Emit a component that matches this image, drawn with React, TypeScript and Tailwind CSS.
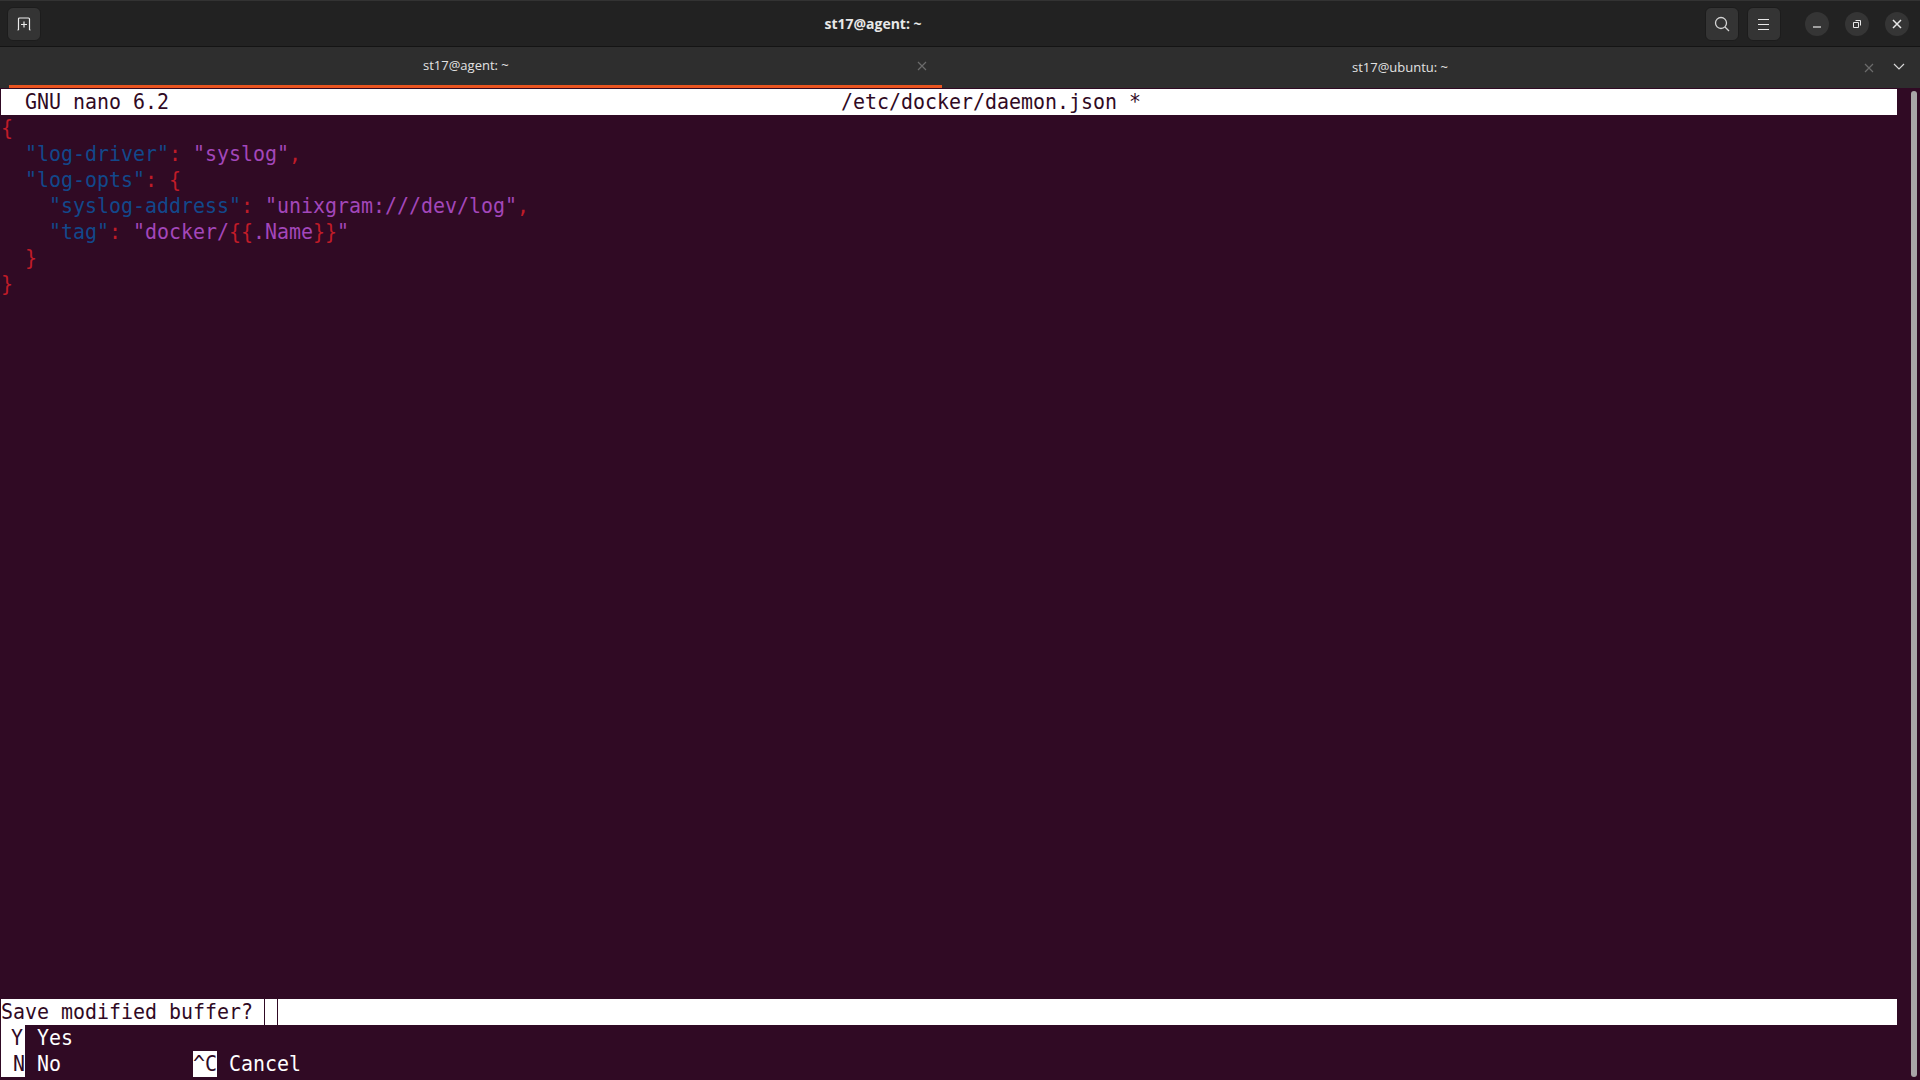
import React from "react";

const R = "text-[#c01c28]";
const B = "text-[#12488b]";
const M = "text-[#a347ba]";
const W = "text-[#ffffff]";

function Mono({ children }: { children: React.ReactNode }) {
  return (
    <div className="whitespace-pre origin-left scale-x-[0.906] font-['DejaVu_Sans_Mono',monospace] text-[22px] leading-[26px] w-max">
      {children}
    </div>
  );
}

function Row({ children }: { children?: React.ReactNode }) {
  return <div className="h-[26px] pl-px overflow-hidden shrink-0">{children}</div>;
}

function IconBtn({ children }: { children: React.ReactNode }) {
  return (
    <div className="w-[34px] h-[34px] rounded-[6px] bg-[#343434] border border-[#1c1c1c] flex items-center justify-center">
      {children}
    </div>
  );
}

function WinBtn({ children }: { children: React.ReactNode }) {
  return <div className="w-6 h-6 rounded-full bg-[#353535] flex items-center justify-center">{children}</div>;
}

function TabClose() {
  return (
    <svg width="10" height="10" viewBox="0 0 10 10" fill="none" stroke="#6b6b6b" strokeWidth="1.2">
      <path d="M1 1l8 8M9 1l-8 8" />
    </svg>
  );
}

export default function App() {
  return (
    <div className="w-[1920px] h-[1080px] flex flex-col overflow-hidden bg-[#300a24]">
      <div className="h-[47px] shrink-0 bg-[#222222] border-t border-[#333333] border-b-[#141414] border-b flex items-center px-[7px] relative">
        <IconBtn>
          <svg width="16" height="16" viewBox="0 0 16 16" fill="none" stroke="#ebebeb" strokeWidth="1.2">
            <path d="M2.5 14V3c0-.6.4-1 1-1h9c.6 0 1 .4 1 1v11M1.5 14h1M13.5 14h1M8 5.5v6M5 8.5h6" />
          </svg>
        </IconBtn>
        <div className="flex-1 text-center font-['Open_Sans','Noto_Sans',sans-serif] font-bold text-[14px] text-[#e8e8e8]">
          st17@agent: ~
        </div>
        <div className="flex items-center gap-2">
          <IconBtn>
            <svg width="16" height="16" viewBox="0 0 16 16" fill="none" stroke="#d4d4d4" strokeWidth="1.3">
              <circle cx="7" cy="7" r="5.5" />
              <path d="M11 11l4 4" />
            </svg>
          </IconBtn>
          <IconBtn>
            <svg width="16" height="16" viewBox="0 0 16 16" fill="none" stroke="#e8e8e8" strokeWidth="1">
              <path d="M2 3.5h11M2 8.5h11M2 13.5h11" />
            </svg>
          </IconBtn>
          <div className="flex items-center gap-4 ml-4 mr-[4px]">
            <WinBtn>
              <svg width="10" height="10" viewBox="0 0 10 10" fill="none" stroke="#e8e8e8" strokeWidth="1.2">
                <path d="M1 8h8" />
              </svg>
            </WinBtn>
            <WinBtn>
              <svg width="10" height="10" viewBox="0 0 10 10" fill="none" stroke="#e8e8e8" strokeWidth="1">
                <path d="M1.5 3.5h5v5h-5zM3.5 1.5h5v5" />
              </svg>
            </WinBtn>
            <WinBtn>
              <svg width="10" height="10" viewBox="0 0 10 10" fill="none" stroke="#e8e8e8" strokeWidth="1.5">
                <path d="M1 1l8 8M9 1l-8 8" />
              </svg>
            </WinBtn>
          </div>
        </div>
      </div>

      <div className="h-[41px] shrink-0 bg-[#2e2e2e] flex font-['Open_Sans','Noto_Sans',sans-serif] text-[13px] text-[#e2e2e2]">
        <div className="w-[933px] ml-[9px] border-b-[3px] border-[#e95420] flex items-center pl-[414px] pr-[15px] justify-between">
          <span>st17@agent: ~</span>
          <TabClose />
        </div>
        <div className="flex-1 flex items-center pl-[410px]">
          <span>st17@ubuntu: ~</span>
          <div className="ml-auto mr-[46px]">
            <TabClose />
          </div>
        </div>
        <div className="absolute left-[1893px] top-[62px]">
          <svg width="12" height="10" viewBox="0 0 12 10" fill="none" stroke="#d8d8d8" strokeWidth="1.2">
            <path d="M1 2l5 5 5-5" />
          </svg>
        </div>
      </div>

      <div className="flex-1 relative pt-px flex flex-col bg-[#300a24] text-white font-medium">
        <div className="absolute right-[3px] top-[3px] bottom-[3px] w-[6px] rounded-full bg-[#a8a5a7]" />
        <div className="h-[26px] w-[1896px] ml-px bg-white text-[#300a24] font-normal shrink-0 flex relative">
          <div className="absolute left-[24px]"><Mono>GNU nano 6.2</Mono></div>
          <div className="absolute left-[840px]"><Mono>/etc/docker/daemon.json *</Mono></div>
        </div>
        <Row><Mono><span className={R}>{"{"}</span></Mono></Row>
        <Row><Mono>{"  "}<span className={B}>"log-driver"</span><span className={R}>: </span><span className={M}>"syslog"</span><span className={R}>,</span></Mono></Row>
        <Row><Mono>{"  "}<span className={B}>"log-opts"</span><span className={R}>: {"{"}</span></Mono></Row>
        <Row><Mono>{"    "}<span className={B}>"syslog-address"</span><span className={R}>: </span><span className={M}>"unixgram:///dev/log"</span><span className={R}>,</span></Mono></Row>
        <Row><Mono>{"    "}<span className={B}>"tag"</span><span className={R}>: </span><span className={M}>"docker/</span><span className={R}>{"{{"}</span><span className={M}>.Name</span><span className={R}>{"}}"}</span><span className={M}>"</span></Mono></Row>
        <Row><Mono>{"  "}<span className={R}>{"}"}</span></Mono></Row>
        <Row><Mono><span className={R}>{"}"}</span></Mono></Row>
        <div className="flex-1" />
        <div className="h-[26px] w-[1896px] ml-px bg-white text-[#300a24] font-normal shrink-0 relative">
          <Mono>Save modified buffer?</Mono>
          <div className="absolute left-[263px] top-0 h-full w-px bg-[#300a24]" />
          <div className="absolute left-[276px] top-0 h-full w-px bg-[#300a24]" />
        </div>
        <div className="h-[26px] shrink-0 flex font-normal">
          <div className="w-[24px] ml-px bg-white text-[#300a24] flex justify-end pr-0"><Mono> Y</Mono></div>
          <div className="pl-3"><Mono>Yes</Mono></div>
        </div>
        <div className="h-[26px] shrink-0 flex font-normal relative">
          <div className="w-[24px] ml-px bg-white text-[#300a24]"><Mono> N</Mono></div>
          <div className="pl-3"><Mono>No</Mono></div>
          <div className="absolute left-[193px] w-[24px] h-full bg-white text-[#300a24]"><Mono>^C</Mono></div>
          <div className="absolute left-[229px]"><Mono>Cancel</Mono></div>
        </div>
        <div className="h-[3px] shrink-0" />
      </div>
    </div>
  );
}
